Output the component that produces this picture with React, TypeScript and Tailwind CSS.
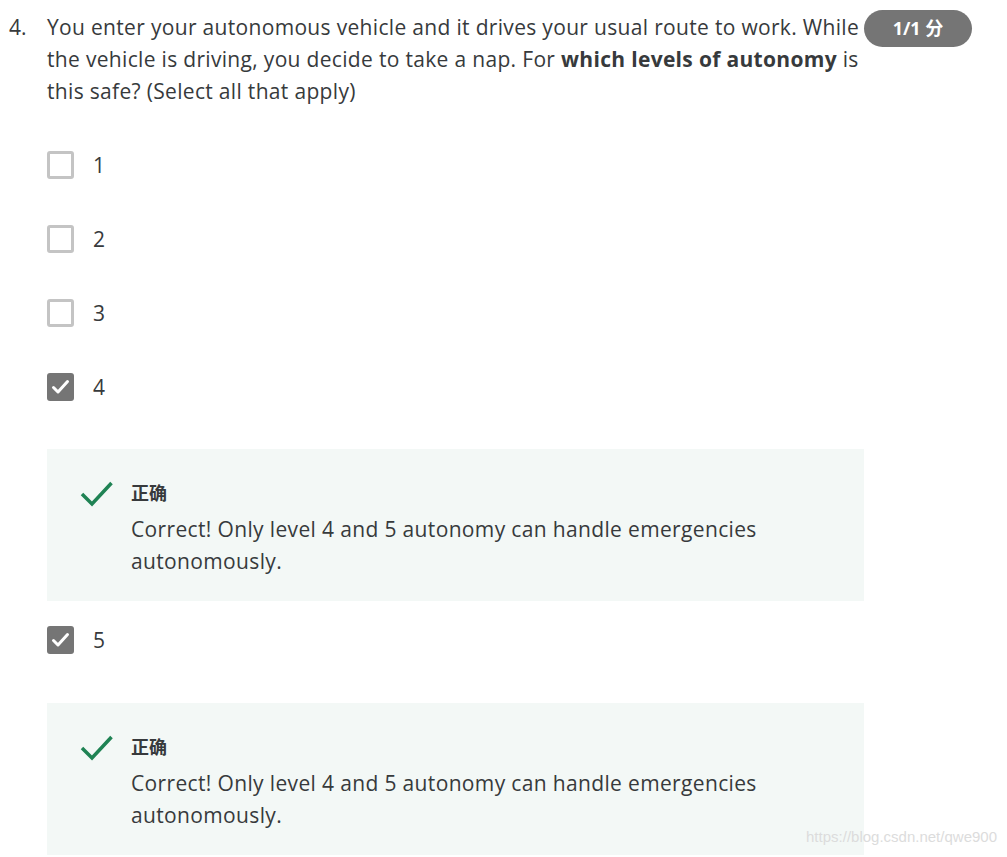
import React from "react";

const font = { fontFamily: '"Open Sans", "Noto Sans CJK SC", sans-serif' };

function Box({ checked }: { checked?: boolean }) {
  if (checked) {
    return (
      <div className="w-[27px] h-[28px] rounded-[3px] bg-[#757575] flex items-center justify-center">
        <svg width="27" height="28" viewBox="0 0 27 28">
          <path d="M6.5 14.5 L11 19 L20.5 8.5" fill="none" stroke="#fff" strokeWidth="3" strokeLinecap="round" strokeLinejoin="round" />
        </svg>
      </div>
    );
  }
  return <div className="w-[27px] h-[28px] rounded-[3px] border-[3px] border-[#c4c4c4] bg-white" />;
}

function Option({ label, checked }: { label: string; checked?: boolean }) {
  return (
    <div className="h-[74px] flex items-center gap-[19px]">
      <Box checked={checked} />
      <span className="text-[21px] text-[#373a3c] leading-[32px]">{label}</span>
    </div>
  );
}

function Feedback() {
  return (
    <div className="bg-[#f3f8f6] w-[817px] h-[152px] pl-[33px] pt-[28px] flex">
      <div className="w-[51px] pt-[3px]">
        <svg width="34" height="28" viewBox="0 0 34 28">
          <path d="M2 14 L12 24 L31.5 3" fill="none" stroke="#1f8354" strokeWidth="3.5" strokeLinecap="butt" strokeLinejoin="miter" />
        </svg>
      </div>
      <div>
        <div className="text-[18px] font-bold leading-[32px] text-[#373a3c]">正确</div>
        <div className="mt-[4px] text-[21px] tracking-[0.35px] leading-[32px] text-[#373a3c] w-[680px]">
          Correct! Only level 4 and 5 autonomy can handle emergencies autonomously.
        </div>
      </div>
    </div>
  );
}

export default function App() {
  return (
    <div className="relative w-[1007px] h-[857px] bg-white overflow-hidden" style={font}>
      <div className="flex pt-[11px]">
        <div className="w-[47px] pl-[9px] text-[21px] leading-[32px] text-[#373a3c]">4.</div>
        <div className="w-[817px] text-[21px] tracking-[0.32px] leading-[32px] text-[#373a3c]">
          You enter your autonomous vehicle and it drives your usual route to work. While the vehicle is driving, you decide to take a nap. For <b className="font-bold">which levels of autonomy</b> is this safe? (Select all that apply)
        </div>
        <div className="-mt-[1px] h-[37px] w-[108px] rounded-full bg-[#757575] text-white font-bold text-[18px] flex items-center justify-center">
          1/1 分
        </div>
      </div>
      <div className="pl-[47px] pt-[21px]">
        <Option label="1" />
        <Option label="2" />
        <Option label="3" />
        <Option label="4" checked />
        <div className="mt-[25px]">
          <Feedback />
        </div>
        <div className="mt-[2px]">
          <Option label="5" checked />
        </div>
        <div className="mt-[26px]">
          <Feedback />
        </div>
      </div>
      <div
        className="absolute right-[10px] bottom-[9px] text-[15px] text-[#dcdcdc]"
        style={{ fontFamily: '"Liberation Sans", Arial, sans-serif' }}
      >
        https://blog.csdn.net/qwe900
      </div>
    </div>
  );
}
